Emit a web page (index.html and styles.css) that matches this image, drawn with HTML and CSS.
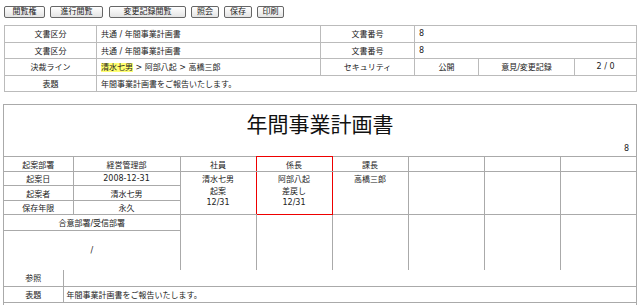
FILE: index.html
```html
<!DOCTYPE html>
<html lang="ja">
<head>
  <meta charset="UTF-8" />
  <title>年間事業計画書</title>
  <link rel="stylesheet" href="styles.css">
</head>
<body>
  <!-- Toolbar -->
  <div class="toolbar">
    <button class="btn btn-3">閲覧権</button>
    <button class="btn btn-4">進行閲覧</button>
    <button class="btn btn-6">変更記録閲覧</button>
    <button class="btn btn-2">照会</button>
    <button class="btn btn-2">保存</button>
    <button class="btn btn-2 btn-last">印刷</button>
  </div>

  <!-- Document info -->
  <table class="info-table">
    <colgroup>
      <col style="width:92px"><col style="width:224px"><col style="width:94px">
      <col style="width:64px"><col style="width:96px"><col style="width:62px">
    </colgroup>
    <tr>
      <td class="label">文書区分</td>
      <td>共通 / 年間事業計画書</td>
      <td class="label">文書番号</td>
      <td colspan="3">8</td>
    </tr>
    <tr>
      <td class="label">文書区分</td>
      <td>共通 / 年間事業計画書</td>
      <td class="label">文書番号</td>
      <td colspan="3">8</td>
    </tr>
    <tr>
      <td class="label">決裁ライン</td>
      <td><span class="current">清水七男</span> &gt; 阿部八起 &gt; 高橋三郎</td>
      <td class="label">セキュリティ</td>
      <td class="label">公開</td>
      <td class="label">意見/変更記録</td>
      <td class="label">2 / 0</td>
    </tr>
    <tr>
      <td class="label">表題</td>
      <td colspan="5">年間事業計画書をご報告いたします。</td>
    </tr>
  </table>

  <!-- Document body -->
  <div class="doc">
    <div class="doc-title">
      <h1>年間事業計画書</h1>
      <div class="doc-no">8</div>
    </div>

    <table class="flow">
      <colgroup>
        <col style="width:69px"><col style="width:107px">
        <col><col><col><col><col><col>
      </colgroup>
      <tr class="row-head">
        <td>起案部署</td>
        <td>経営管理部</td>
        <td class="step-prev">社員</td>
        <td class="step-now now-top">係長</td>
        <td>課長</td>
        <td></td><td></td><td></td>
      </tr>
      <tr class="row-a">
        <td>起案日</td>
        <td>2008-12-31</td>
        <td rowspan="3" class="step step-prev">清水七男<br>起案<br>12/31</td>
        <td rowspan="3" class="step step-now now-bottom">阿部八起<br>差戻し<br>12/31</td>
        <td rowspan="3" class="step">高橋三郎</td>
        <td rowspan="3"></td><td rowspan="3"></td><td rowspan="3"></td>
      </tr>
      <tr class="row-b">
        <td>起案者</td>
        <td>清水七男</td>
      </tr>
      <tr class="row-a">
        <td>保存年限</td>
        <td>永久</td>
      </tr>
      <tr class="row-dept">
        <td colspan="2">合意部署/受信部署</td>
        <td rowspan="2"></td><td rowspan="2"></td><td rowspan="2"></td>
        <td rowspan="2"></td><td rowspan="2"></td><td rowspan="2"></td>
      </tr>
      <tr class="row-tall">
        <td colspan="2">/</td>
      </tr>
    </table>

    <table class="refs">
      <colgroup>
        <col style="width:59px"><col>
      </colgroup>
      <tr>
        <td class="label">参照</td>
        <td></td>
      </tr>
      <tr>
        <td class="label">表題</td>
        <td>年間事業計画書をご報告いたします。</td>
      </tr>
    </table>
  </div>
</body>
</html>
```

FILE: styles.css
```css
/* Reset & Base */
* {
  margin: 0;
  padding: 0;
  box-sizing: border-box;
}

body {
  font-family: "DejaVu Sans", "Noto Sans CJK JP", sans-serif;
  font-size: 8px;
  color: #222;
  background: #fff;
  padding: 6px 3px 0 3px;
}

/* Toolbar */
.toolbar {
  display: flex;
  gap: 5px;
  padding-left: 1px;
}

.btn {
  height: 12px;
  font: inherit;
  line-height: 10px;
  color: #222;
  border: 1px solid #666;
  border-radius: 2px;
  background: linear-gradient(#fff, #e4e4e4);
}

.btn-3 { width: 41px; }
.btn-4 { width: 53px; margin-left: 0; }
.btn-6 { width: 77px; margin-left: 1px; }
.btn-2 { width: 28px; }
.btn-last { width: 27px; }

/* Info table */
.info-table {
  margin: 7px 0 0 1px;
  width: 632px;
  border-collapse: collapse;
  table-layout: fixed;
}

.info-table td {
  border: 1px solid #bbb;
  height: 16.5px;
  padding: 0 3px 0 4px;
  white-space: nowrap;
}

.info-table td.label {
  text-align: center;
  padding: 0;
}

.current {
  background: #ffff70;
}

/* Document */
.doc {
  margin-top: 12px;
  width: 634px;
  height: 230px;
  border: 1px solid #aaa;
}

.doc-title {
  height: 51px;
  display: flex;
  flex-direction: column;
  padding: 3px 7px 2px;
}

.doc-title h1 {
  font-family: "Noto Sans CJK JP", sans-serif;
  font-size: 21px;
  font-weight: normal;
  line-height: 30px;
  text-align: center;
  color: #111;
}

.doc-no {
  margin-top: auto;
  align-self: flex-end;
  line-height: 11px;
}

/* Approval flow */
.flow {
  width: 100%;
  border-collapse: collapse;
  table-layout: fixed;
  border-style: none hidden hidden hidden;
}

.flow td {
  border: 1px solid #aaa;
  text-align: center;
  padding: 0;
  white-space: nowrap;
}

.row-head td { height: 15px; }
.row-a td { height: 14px; }
.row-b td { height: 15px; }
.row-dept td { height: 16px; }
.row-tall td { height: 39px; }

.flow td.step {
  vertical-align: top;
  padding-top: 2px;
  line-height: 11.5px;
}

.flow td.step-prev {
  border-right-color: #e00;
}

.flow td.step-now {
  border-left-color: #e00;
  border-right-color: #e00;
}

.flow td.now-top {
  border-top-color: #e00;
}

.flow td.now-bottom {
  border-bottom-color: #e00;
}

/* References */
.refs {
  width: 100%;
  border-collapse: collapse;
  table-layout: fixed;
  border-style: hidden hidden solid hidden;
  border-bottom: 1px solid #999;
}

.refs td {
  border: 1px solid #aaa;
  height: 16.5px;
  padding: 0 3px;
  white-space: nowrap;
}

.refs td.label {
  text-align: center;
  padding: 0;
}
```
